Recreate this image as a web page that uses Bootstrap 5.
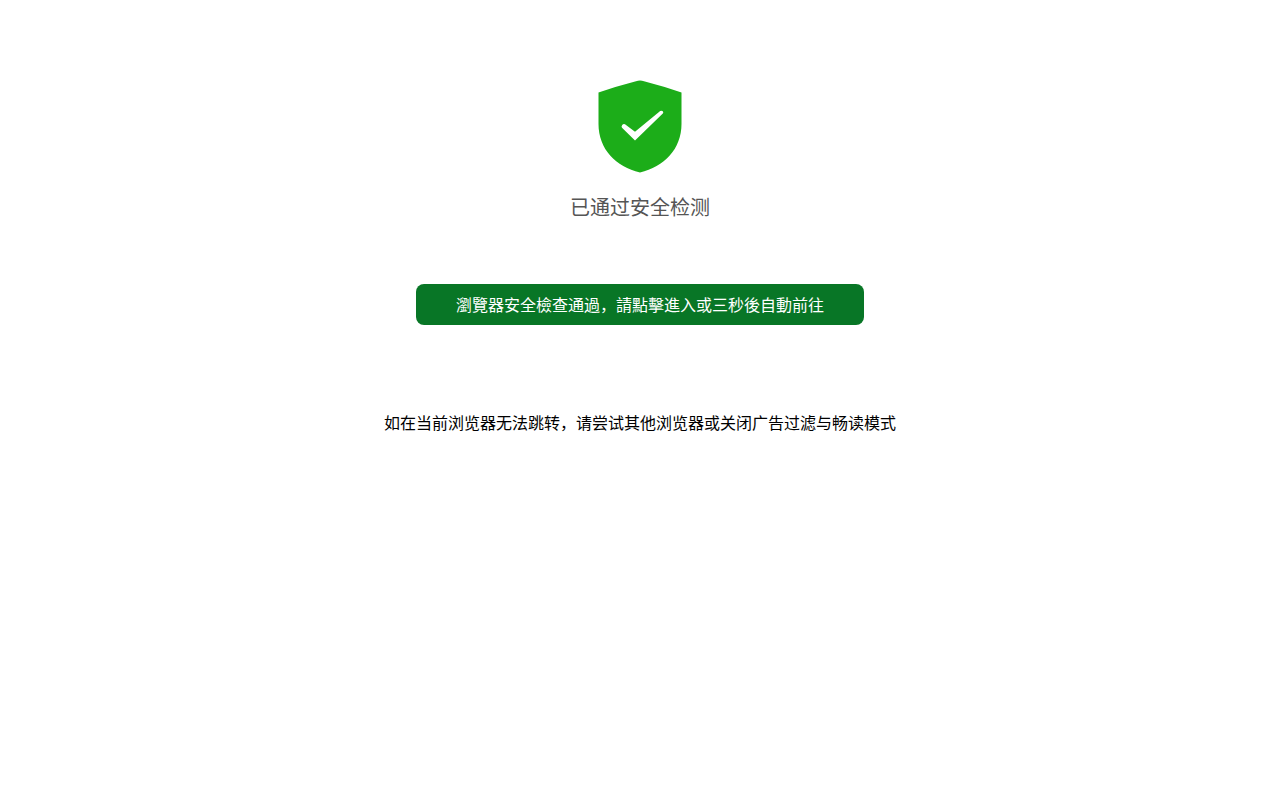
<!DOCTYPE html>
<html lang="zh-CN">
<head>
<meta charset="utf-8">
<meta name="viewport" content="width=device-width, initial-scale=1">
<title>安全检测</title>
<link href="https://cdn.jsdelivr.net/npm/bootstrap@5.3.0/dist/css/bootstrap.min.css" rel="stylesheet">
<style>
  body { font-family: "Noto Sans CJK SC", sans-serif; color: #000; background: #fff; }
  .check-page { padding-top: 76px; }
  .shield { width: 100px; height: 100px; }
  .status { font-size: 20px; line-height: 30px; color: #555; margin-top: 16px; }
  .enter { --bs-btn-color: #fff; --bs-btn-bg: #087626; --bs-btn-hover-color: #fff; --bs-btn-hover-bg: #066320; --bs-btn-active-color: #fff; --bs-btn-active-bg: #055219;
    font-size: 16px; line-height: 25px; padding: 8px 40px; border: 0; border-radius: 8px; margin-top: 62px; }
  .hint { font-size: 16px; line-height: 24px; margin-top: 85px; }
</style>
</head>
<body>
<main class="container check-page d-flex flex-column align-items-center text-center">
  <svg class="shield" viewBox="0 0 100 100" role="img" aria-label="安全">
    <path fill="#1cad19" d="M46 5.300Q50 3.900 54 5.300Q74 10.500 91.500 16.500V48C91.500 73 74 91 50 96.500C26 91 8.500 73 8.500 48V16.500Q26 10.500 46 5.300Z"/>
    <path fill="#fff" d="M35 48.200L45 55.800L70.200 35Q71.500 34.200 72.800 35.200Q73.800 36.400 72.800 37.600L45 64.500L32 51.800Q31 50.600 32.200 49Q33.500 47.300 35 48.200Z"/>
  </svg>
  <p class="status mb-0">已通过安全检测</p>
  <a class="btn enter" href="#">瀏覽器安全檢查通過，請點擊進入或三秒後自動前往</a>
  <p class="hint mb-0">如在当前浏览器无法跳转，请尝试其他浏览器或关闭广告过滤与畅读模式</p>
</main>
<script src="https://cdn.jsdelivr.net/npm/bootstrap@5.3.0/dist/js/bootstrap.bundle.min.js"></script>
</body>
</html>
